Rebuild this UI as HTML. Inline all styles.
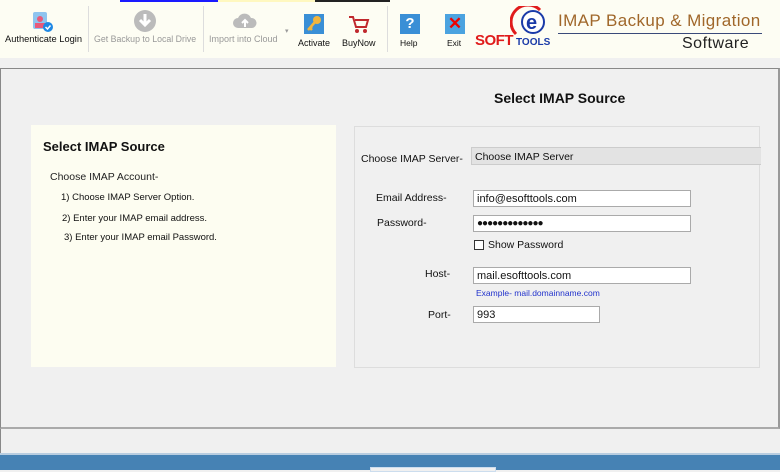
<!DOCTYPE html>
<html><head><style>
*{margin:0;padding:0;box-sizing:border-box}
body{width:780px;height:470px;overflow:hidden;background:#f0f0f0;font-family:"Liberation Sans",sans-serif;position:relative;font-size:11px;color:#111}
.a{position:absolute}
.tb{left:0;top:0;width:780px;height:58px;background:#fdfdf3}
.lbl{font-size:9px;white-space:nowrap}
.sep{width:1px;height:46px;top:6px;background:#ddd}
.box{background:#fff;border:1px solid #aaa;height:17px;font-size:11px;padding:1px 3px;line-height:14px}
</style></head><body>
<div class="a tb"></div>
<div class="a" style="left:120px;top:0;width:98px;height:2px;background:#1a1aff"></div>
<div class="a" style="left:218px;top:0;width:97px;height:2px;background:#fff8c0"></div>
<div class="a" style="left:315px;top:0;width:75px;height:2px;background:#222"></div>
<svg class="a" style="left:30px;top:9px" width="24" height="24"><rect x="3" y="3" width="14" height="17" rx="2" fill="#8fc4ef"/><circle cx="10" cy="10" r="3" fill="#e85a7a"/><rect x="5" y="14" width="10" height="5" fill="#e85a7a"/><circle cx="18" cy="18" r="5" fill="#1e88e5"/><path d="M15.5 18l2 2 3-3.5" stroke="#fff" stroke-width="1.5" fill="none"/></svg>
<div class="a lbl" style="left:5px;top:34px;color:#111;font-size:9.3px">Authenticate Login</div>
<div class="a sep" style="left:88px"></div>
<svg class="a" style="left:133px;top:9px" width="24" height="24"><circle cx="12" cy="12" r="11" fill="#bbb"/><path d="M12 5v10M7 11l5 5 5-5" stroke="#fff" stroke-width="3" fill="none"/></svg>
<div class="a lbl" style="left:94px;top:34px;color:#999;font-size:8.8px">Get Backup to Local Drive</div>
<div class="a sep" style="left:203px"></div>
<svg class="a" style="left:232px;top:12px" width="26" height="18"><path d="M6 16a5 5 0 0 1 0-10 7 7 0 0 1 13 0 5 5 0 0 1 1 10z" fill="#bbb"/><path d="M13 15V9M10 11l3-3 3 3" stroke="#fff" stroke-width="2" fill="none"/></svg>
<div class="a lbl" style="left:209px;top:34px;color:#999">Import into Cloud</div>
<div class="a" style="left:285px;top:27px;font-size:7px;color:#999">▾</div>
<div class="a" style="left:304px;top:14px;width:20px;height:20px;background:#3a8fd6"></div>
<svg class="a" style="left:304px;top:14px" width="20" height="20"><circle cx="13" cy="6" r="4" fill="#f2b53c"/><path d="M11 8L4 16M6 14l2 2M7 13l1 1" stroke="#f2b53c" stroke-width="2.5"/></svg>
<div class="a lbl" style="left:298px;top:38px">Activate</div>
<svg class="a" style="left:348px;top:14px" width="22" height="20"><path d="M1 3h4l3 10h10l2-7H7" stroke="#c0282d" stroke-width="2" fill="none"/><circle cx="9" cy="17" r="2" fill="#c0282d"/><circle cx="17" cy="17" r="2" fill="#c0282d"/></svg>
<div class="a lbl" style="left:342px;top:38px">BuyNow</div>
<div class="a sep" style="left:387px"></div>
<div class="a" style="left:400px;top:14px;width:20px;height:20px;background:#3a8fd6;color:#fff;font-weight:bold;font-size:15px;text-align:center;line-height:20px">?</div>
<div class="a lbl" style="left:400px;top:38px;font-size:8.5px">Help</div>
<div class="a" style="left:445px;top:14px;width:20px;height:20px;background:#4ba3e0;color:#e00;font-weight:bold;font-size:17px;text-align:center;line-height:20px">✕</div>
<div class="a lbl" style="left:447px;top:38px;font-size:8.5px">Exit</div>
<svg class="a" style="left:510px;top:6px" width="40" height="32"><path d="M6 28A15 15 0 0 1 30 4" stroke="#e01b1b" stroke-width="3" fill="none"/><circle cx="23" cy="16" r="11" fill="#fff" stroke="#1a3aa8" stroke-width="2"/><text x="16" y="23" font-size="20" font-weight="bold" fill="#1a3aa8" font-family="Liberation Sans">e</text></svg>
<div class="a" style="left:475px;top:32px;color:#e01b1b;font-weight:bold;font-size:15px;letter-spacing:-0.5px">SOFT</div>
<div class="a" style="left:516px;top:37px;color:#1a3aa8;font-weight:bold;font-size:10px">TOOLS</div>
<div class="a" style="left:558px;top:11px;color:#a0672a;font-size:17px;letter-spacing:0.4px">IMAP Backup &amp; Migration</div>
<div class="a" style="left:558px;top:33px;width:204px;height:1px;background:#3a4a7a"></div>
<div class="a" style="left:682px;top:35px;color:#222;font-size:16px;letter-spacing:0.5px">Software</div>
<div class="a" style="left:0;top:68px;width:780px;height:361px;border:1px solid #888;border-right:2px solid #999;border-bottom:2px solid #aaa"></div>
<div class="a" style="left:494px;top:90px;font-weight:bold;font-size:14px">Select IMAP Source</div>
<div class="a" style="left:31px;top:125px;width:305px;height:242px;background:#fdfdf1"></div>
<div class="a" style="left:43px;top:139px;font-weight:bold;font-size:13px">Select IMAP Source</div>
<div class="a" style="left:50px;top:171px;font-size:10.5px;color:#222">Choose IMAP Account-</div>
<div class="a" style="left:61px;top:192px;font-size:9.5px">1) Choose IMAP Server Option.</div>
<div class="a" style="left:62px;top:213px;font-size:9.5px">2) Enter your IMAP email address.</div>
<div class="a" style="left:64px;top:232px;font-size:9.5px">3) Enter your IMAP email Password.</div>
<div class="a" style="left:354px;top:126px;width:406px;height:242px;border:1px solid #ddd"></div>
<div class="a" style="left:361px;top:153px;font-size:10.5px">Choose IMAP Server-</div>
<div class="a" style="left:471px;top:147px;width:290px;height:18px;background:#e3e3e3;border-top:1px solid #ccc;border-bottom:1px solid #ccc;border-left:1px solid #ccc;font-size:10.5px;padding:3px 3px">Choose IMAP Server</div>
<div class="a" style="left:376px;top:192px;font-size:10.5px">Email Address-</div>
<div class="a box" style="left:473px;top:190px;width:218px">info@esofttools.com</div>
<div class="a" style="left:377px;top:217px;font-size:10.5px">Password-</div>
<div class="a box" style="left:473px;top:215px;width:218px;font-size:10px;letter-spacing:-1px">●●●●●●●●●●●●●</div>
<div class="a" style="left:474px;top:240px;width:10px;height:10px;border:1px solid #333;background:#fff"></div>
<div class="a" style="left:488px;top:239px;font-size:10.5px">Show Password</div>
<div class="a" style="left:425px;top:268px;font-size:10.5px">Host-</div>
<div class="a box" style="left:473px;top:267px;width:218px">mail.esofttools.com</div>
<div class="a" style="left:476px;top:288px;font-size:8.5px;color:#2233cc">Example- mail.domainname.com</div>
<div class="a" style="left:428px;top:309px;font-size:10.5px">Port-</div>
<div class="a box" style="left:473px;top:306px;width:127px">993</div>
<div class="a" style="left:0;top:429px;width:1px;height:26px;background:#888"></div>
<div class="a" style="left:0;top:453px;width:780px;height:2px;background:#b8cde0"></div>
<div class="a" style="left:0;top:455px;width:780px;height:15px;background:#4682b4"></div>
<div class="a" style="left:370px;top:467px;width:126px;height:5px;border:1px solid #cde;background:#f0f0f0"></div>
</body></html>
